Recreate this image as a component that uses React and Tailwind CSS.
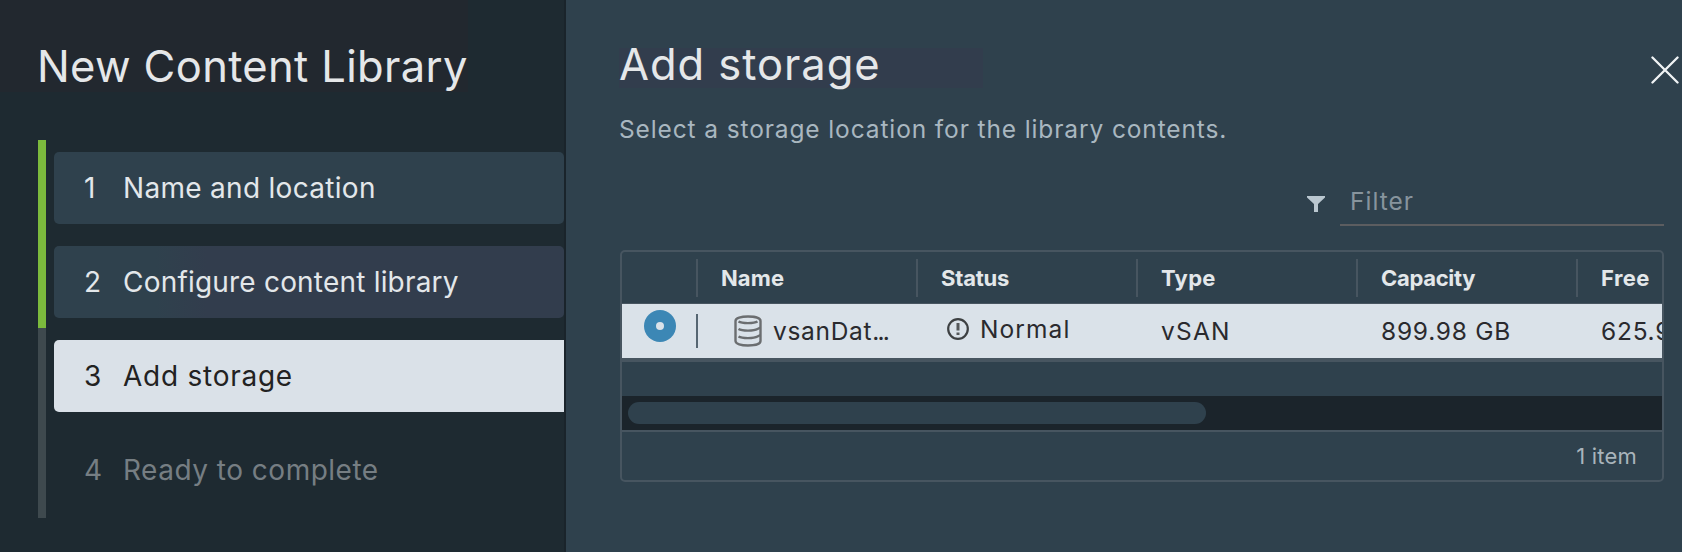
const steps = [
  { n: 1, label: 'Name and location', box: 'rounded-[5px] bg-[#2f414d] text-[#e3e7ea]', spacing: 'tracking-[0.3px]' },
  { n: 2, label: 'Configure content library', box: 'rounded-[5px] bg-linear-to-r from-[#2f414d] from-20% to-[#323d4d] to-30% text-[#e3e7ea]', spacing: 'tracking-[0.2px]' },
  { n: 3, label: 'Add storage', box: 'rounded-l-[5px] bg-[#dae1e8] text-[#222]', spacing: 'tracking-[0.75px]' },
  { n: 4, label: 'Ready to complete', box: 'text-[#767e83]', spacing: 'tracking-[0.5px]' },
];

function Sidebar() {
  return (
    <aside className="flex w-[566px] shrink-0 flex-col border-r-2 border-[#1a242b] bg-[#1e2a31]">
      <div className="h-[92px] w-[468px] bg-[#22282f] pt-[40px] pl-[37px]">
        <h2 className="text-[43.5px] leading-[52px] tracking-[0.35px] whitespace-nowrap text-[#e5e7e9]">New Content Library</h2>
      </div>
      <nav className="mt-12 flex pl-[38px]">
        <div className="flex h-[378px] w-2 flex-col">
          <div className="h-[188px] bg-[#7cba3d]" />
          <div className="flex-1 bg-[#3e494e]" />
        </div>
        <ol className="ml-2 flex flex-1 flex-col gap-[22px] pt-3">
          {steps.map((s) => (
            <li key={s.n} className={`flex h-[72px] items-center pb-px pl-[30px] text-[28px] whitespace-nowrap ${s.box}`}>
              <span className="w-[38px]">{s.n}</span>
              <span className={`pl-px ${s.spacing}`}>{s.label}</span>
            </li>
          ))}
        </ol>
      </nav>
    </aside>
  );
}

function DatabaseIcon() {
  return (
    <svg className="h-8 w-7 shrink-0" viewBox="0 0 28 32" fill="none" stroke="#6b6e70" strokeWidth="2.400">
      <path d="M1.5 6C1.5 3.2 7 1.5 14 1.5S26.500 3.200 26.500 6V26C26.500 28.800 21 30.500 14 30.500S1.500 28.800 1.500 26Z" />
      <path d="M4.500 6.500C8 8.600 20 8.600 23.500 6.500M4.500 14C8 16.100 20 16.100 23.500 14L26.500 12.500M4.500 21.500C8 23.600 20 23.600 23.500 21.500L26.500 20" />
    </svg>
  );
}

function StatusIcon() {
  return (
    <svg className="size-[22px] shrink-0" viewBox="1 1 22 22" fill="none" stroke="#3d4042">
      <circle cx="12" cy="12" r="9.800" strokeWidth="2.200" />
      <path d="M12 6V13.500M12 15.500V18" strokeWidth="3" stroke="#55585a" />
    </svg>
  );
}

const columns = [
  { name: 'Name', spacing: 'tracking-[0.1px]' },
  { name: 'Status', spacing: 'tracking-[-0.2px]' },
  { name: 'Type', spacing: 'tracking-[0.3px]' },
  { name: 'Capacity', spacing: 'tracking-[-0.3px]' },
  { name: 'Free', spacing: 'tracking-[0.4px]' },
];

function StorageTable() {
  return (
    <section className="mt-6 flex h-[232px] w-[1044px] flex-col overflow-hidden rounded-[5px] border-2 border-[#475560]">
      <div className="flex h-[52px] shrink-0 border-b border-[#475560] pl-[74px]">
        {columns.map((c) => (
          <div key={c.name} className="flex w-[220px] shrink-0 items-center">
            <div className="h-[38px] w-[2px] shrink-0 bg-[#475560]" />
            <span className={`pt-[2px] pl-[23px] text-[22px] font-bold text-[#e3e7ea] ${c.spacing}`}>{c.name}</span>
          </div>
        ))}
      </div>
      <div className="flex h-[54px] shrink-0 items-center bg-[#dae2e9] text-[24.5px] whitespace-nowrap text-[#2a2a2e]">
        <div className="flex w-[74px] shrink-0 pb-[11px] pl-[22px]">
          <div className="flex size-8 items-center justify-center rounded-full bg-[#3c87b5]">
            <div className="size-2 rounded-full bg-[#dae2e9]" />
          </div>
        </div>
        <div className="flex w-[220px] shrink-0 items-center">
          <div className="h-[34px] w-[2px] bg-[#566672]" />
          <div className="flex items-center gap-[11px] pl-9">
            <DatabaseIcon />
            <span className="tracking-[0.7px]">vsanDat<span className="tracking-[-1.8px]">...</span></span>
          </div>
        </div>
        <div className="flex w-[220px] shrink-0 items-center gap-[11px] pb-1 pl-[31px]">
          <StatusIcon />
          <span className="tracking-[1.1px]">Normal</span>
        </div>
        <div className="w-[220px] shrink-0 pl-[25px] tracking-[1.2px]">vSAN</div>
        <div className="w-[220px] shrink-0 pl-[25px] tracking-[0.75px]">899.98 GB</div>
        <div className="w-[220px] shrink-0 pl-[25px] tracking-[0.75px]">625.92 GB</div>
      </div>
      <div className="h-[38px] shrink-0 border-t-4 border-[#475560]" />
      <div className="flex h-[34px] shrink-0 items-center bg-[#1b242b] pl-[6px]">
        <div className="h-[22px] w-[578px] rounded-full bg-[#2f414d]" />
      </div>
      <footer className="flex flex-1 items-center justify-end border-t-2 border-[#475560] pr-[25px] text-[22px] tracking-[0.2px] text-[#a9b4bb]">
        1 item
      </footer>
    </section>
  );
}

export default function App() {
  return (
    <div className="flex h-[552px] w-[1682px] overflow-hidden bg-[#2f414d] font-['Inter','Liberation_Sans',sans-serif]">
      <Sidebar />
      <main className="flex flex-1 flex-col pl-[54px]">
        <div className="flex h-[90px] items-start justify-between pt-[38px]">
          <h1 className="mt-[10px] -ml-px h-10 w-[364px] bg-[#323d4d] text-[43.5px] leading-8 tracking-[0.95px] text-[#e5e7e9]">Add storage</h1>
          <svg className="mt-[18px] mr-[3px] h-[28px] w-[28px]" viewBox="0 0 29 29" stroke="#f0f3f5" strokeWidth="2.400" strokeLinecap="round">
            <path d="M1.500 1.500L27.500 27.500M27.500 1.500L1.500 27.500" />
          </svg>
        </div>
        <p className="-ml-px mt-[23px] text-[24.5px] leading-8 tracking-[0.88px] text-[#a9b7c0]">Select a storage location for the library contents.</p>
        <div className="mt-[33px] flex h-[48px] items-start pl-[687px]">
          <svg className="mt-[18px] h-4 w-[18px]" viewBox="0 0 18 16" fill="#bac7d0">
            <path d="M0 0H18V1.500L11 8V16H7V8L0 1.500Z" />
          </svg>
          <div className="ml-[15px] h-12 w-[324px] border-b-2 border-[#5c5d60] pt-[7px] pl-[10px] text-[24.5px] leading-[32px] tracking-[1px] text-[#87949d]">Filter</div>
        </div>
        <StorageTable />
      </main>
    </div>
  );
}
